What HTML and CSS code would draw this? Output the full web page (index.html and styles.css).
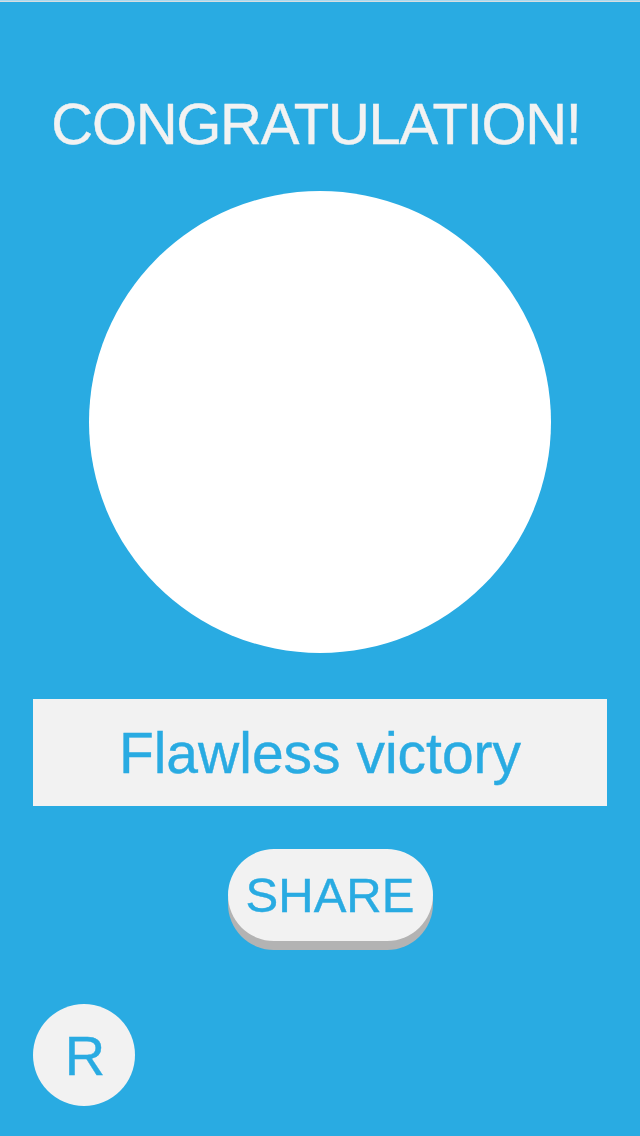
FILE: index.html
```html
<!DOCTYPE html>
<html>
<head>
<meta charset="utf-8">
<link rel="stylesheet" href="styles.css">
</head>
<body>
<div class="screen">
  <div class="top-strip"></div>
  <h1 class="title">CONGRATULATION!</h1>
  <div class="badge"></div>
  <div class="result">Flawless victory</div>
  <button class="share">SHARE</button>
  <button class="restart">R</button>
</div>
</body>
</html>
```
FILE: styles.css
```css
html, body {
  margin: 0;
  padding: 0;
}
body {
  background: #29abe2;
  font-family: "Liberation Sans", Arial, sans-serif;
}
.screen {
  width: 640px;
  height: 1136px;
  display: flex;
  flex-direction: column;
  align-items: center;
  overflow: hidden;
}
.top-strip {
  align-self: stretch;
  height: 2px;
  background: linear-gradient(#a8d9ef 0 1px, #d6dde0 1px 2px);
}
.title {
  margin: 93px 0 0 0;
  font-size: 58px;
  line-height: 58px;
  font-weight: 400;
  letter-spacing: -1.3px;
  color: #f2f2f2;
  padding-right: 8px;
  -webkit-text-stroke: 0.4px #f2f2f2;
}
.badge {
  margin-top: 38px;
  width: 462px;
  height: 462px;
  border-radius: 50%;
  background: #ffffff;
}
.result {
  margin-top: 46px;
  width: 574px;
  height: 107px;
  background: #f2f2f2;
  color: #29abe2;
  font-size: 57px;
  display: flex;
  align-items: center;
  justify-content: center;
  -webkit-text-stroke: 0.4px #29abe2;
}
.share {
  margin: 43px 0 0 20px;
  width: 205px;
  height: 92px;
  border: none;
  border-radius: 46px;
  background: #f2f2f2;
  box-shadow: 0 9px 0 #b3b3b3;
  color: #29abe2;
  font-family: "Liberation Sans", Arial, sans-serif;
  font-size: 49px;
  padding: 0;
  -webkit-text-stroke: 0.4px #29abe2;
}
.restart {
  align-self: flex-start;
  margin: 63px 0 0 33px;
  width: 102px;
  height: 102px;
  border: none;
  border-radius: 50%;
  background: #f2f2f2;
  color: #29abe2;
  font-family: "Liberation Sans", Arial, sans-serif;
  font-size: 56px;
  padding: 0 0 0 2px;
  -webkit-text-stroke: 0.4px #29abe2;
}
```
